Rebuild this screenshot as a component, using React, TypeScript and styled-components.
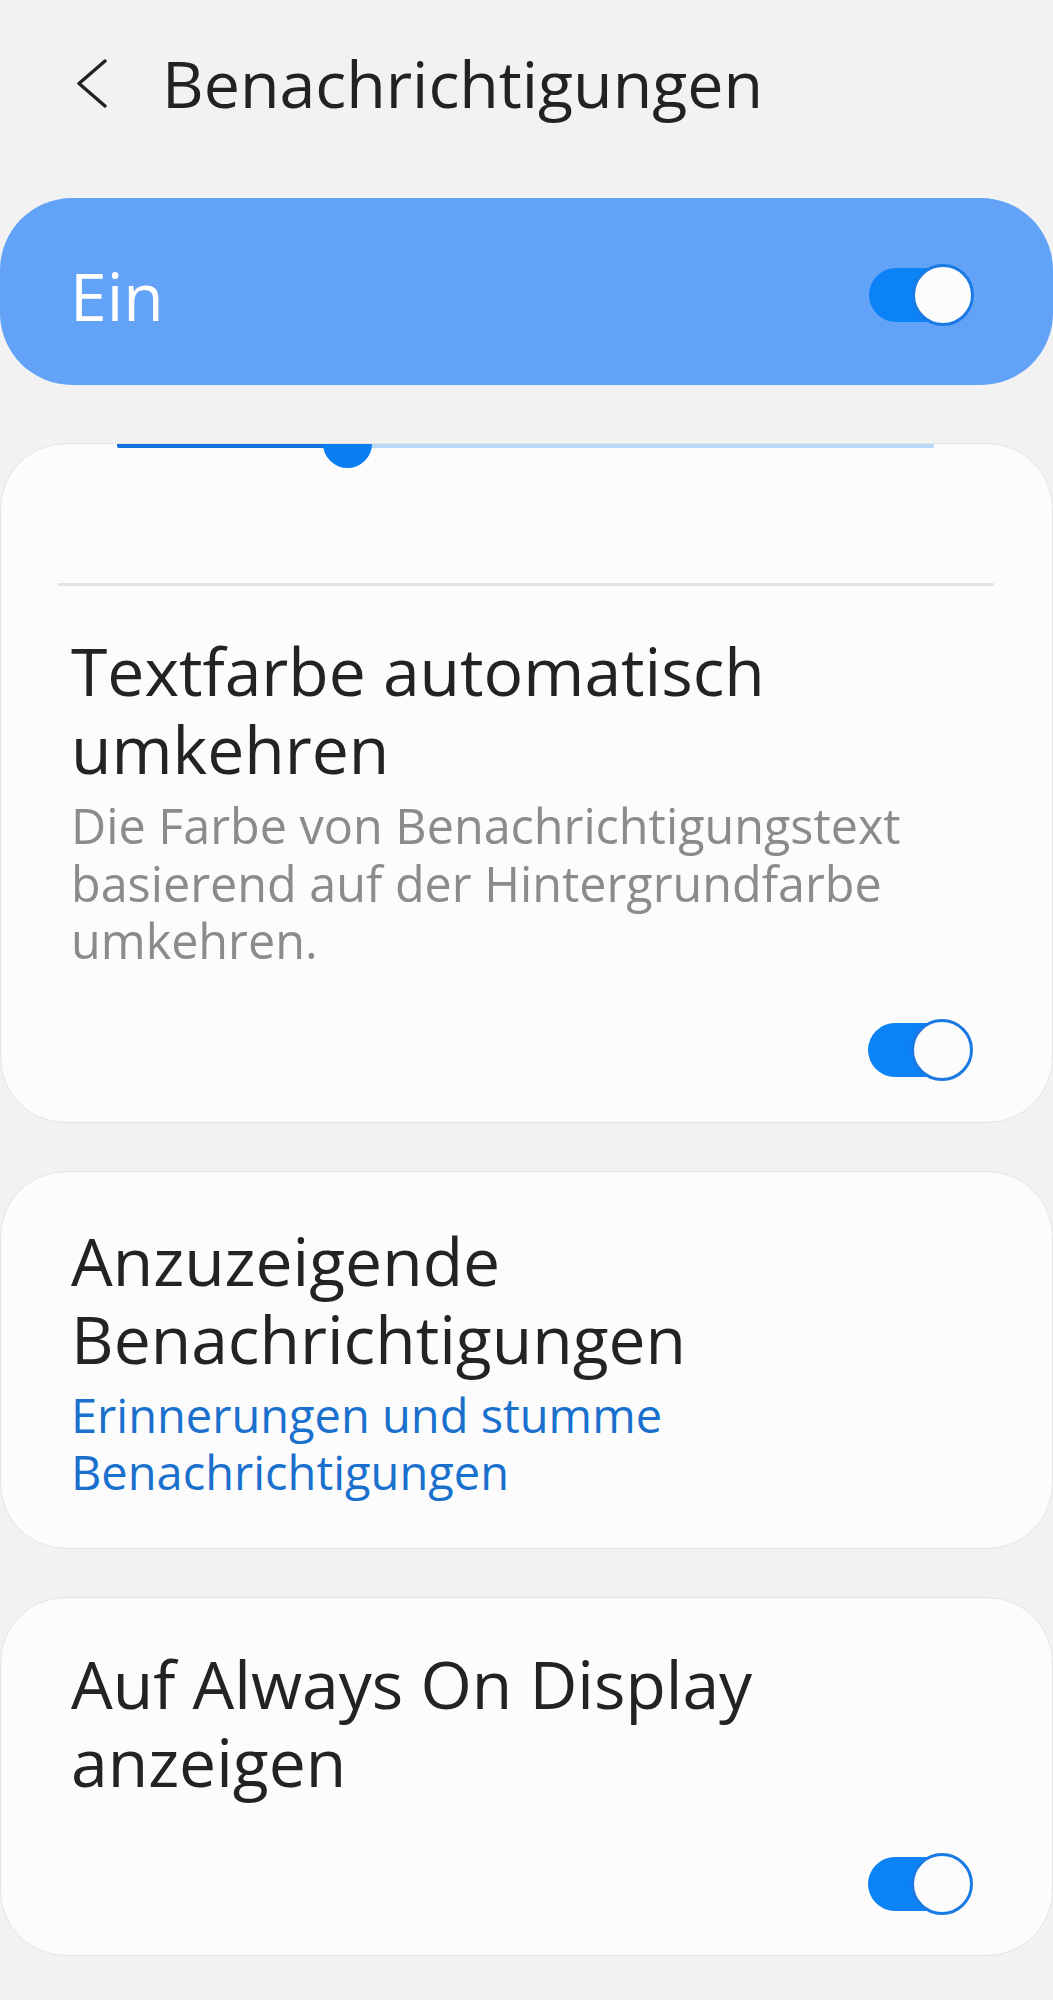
import React from "react";
import styled, { createGlobalStyle } from "styled-components";

const GlobalStyle = createGlobalStyle`
  html, body {
    margin: 0;
    padding: 0;
    background: #f2f2f2;
  }
  body {
    font-family: "Open Sans", "Noto Sans", sans-serif;
    -webkit-font-smoothing: antialiased;
  }
  * { box-sizing: border-box; }
`;

const Page = styled.div`
  width: 1053px;
  min-height: 2000px;
  background: #f2f2f2;
  display: flex;
  flex-direction: column;
  padding-bottom: 48px;
`;

const Header = styled.header`
  display: flex;
  align-items: center;
  gap: 54px;
  padding: 43px 0 0 76px;
  height: 123px;
`;

const BackIcon = styled.svg`
  width: 32px;
  height: 50px;
  flex-shrink: 0;
`;

const Title = styled.h1`
  margin: 0;
  font-size: 64.5px;
  line-height: 80px;
  font-weight: 400;
  color: #222222;
`;

const MasterBar = styled.div`
  margin-top: 75px;
  height: 187px;
  border-radius: 72px;
  background: #62a3f8;
  display: flex;
  align-items: center;
  justify-content: space-between;
  padding: 6px 79px 0 70px;
`;

const MasterLabel = styled.span`
  font-size: 66px;
  line-height: 80px;
  color: #ffffff;
`;

const ToggleBox = styled.div`
  position: relative;
  width: 105px;
  height: 62px;
  flex-shrink: 0;
`;

const ToggleTrack = styled.div`
  position: absolute;
  left: 0;
  top: 4px;
  width: 96px;
  height: 54px;
  border-radius: 27px;
  background: #0b82f6;
`;

const ToggleThumb = styled.div`
  position: absolute;
  right: 0;
  top: 0;
  width: 62px;
  height: 62px;
  border-radius: 50%;
  background: #fcfcfc;
  border: 3px solid #1a7ae4;
`;

const Toggle = () => (
  <ToggleBox>
    <ToggleTrack />
    <ToggleThumb />
  </ToggleBox>
);

const Card = styled.section<{ $top: number }>`
  margin-top: ${(p) => p.$top}px;
  background: #fcfcfc;
  border: 1px solid #e4e4e4;
  border-radius: 66px;
  overflow: hidden;
  display: flex;
  flex-direction: column;
`;

const SliderTrack = styled.div`
  position: relative;
  margin: 0 118px 0 116px;
  height: 4px;
  background: #b9d7f6;
  border-radius: 0 0 2px 2px;
`;

const SliderFill = styled.div`
  height: 100%;
  background: #1273de;
  border-radius: 0 0 2px 2px;
`;

const SliderThumb = styled.div`
  position: absolute;
  top: -25px;
  width: 49px;
  height: 49px;
  margin-left: -24.5px;
  border-radius: 50%;
  background: #0b7ef2;
`;

const Divider = styled.div`
  margin: 135px 58px 0 57px;
  height: 3px;
  background: #e3e3e3;
`;

const Item = styled.div<{ $top: number; $bottom: number }>`
  display: flex;
  flex-direction: column;
  padding: ${(p) => p.$top}px 70px ${(p) => p.$bottom}px 70px;
`;

const ItemTitle = styled.div`
  font-size: 66px;
  line-height: 78px;
  color: #232323;
`;

const ItemText = styled.div<{ $link?: boolean }>`
  margin-top: 10px;
  font-size: ${(p) => (p.$link ? 47 : 48.5)}px;
  line-height: 57.5px;
  color: ${(p) => (p.$link ? "#1a70cd" : "#8b8b8b")};
`;

const ToggleRow = styled.div<{ $top: number }>`
  display: flex;
  justify-content: flex-end;
  margin: ${(p) => p.$top}px 9px 0 0;
`;

export default function App() {
  const sliderPos = 230;
  return (
    <>
      <GlobalStyle />
      <Page>
        <Header>
          <BackIcon viewBox="0 0 32 50" fill="none">
            <polyline
              points="29,3 3,25.5 29,48"
              stroke="#222222"
              strokeWidth="3.4"
              strokeLinecap="round"
              strokeLinejoin="round"
            />
          </BackIcon>
          <Title>Benachrichtigungen</Title>
        </Header>

        <MasterBar>
          <MasterLabel>Ein</MasterLabel>
          <Toggle />
        </MasterBar>

        <Card $top={58}>
          <SliderTrack>
            <SliderFill style={{ width: sliderPos }} />
            <SliderThumb style={{ left: sliderPos }} />
          </SliderTrack>
          <Divider />
          <Item $top={45} $bottom={41}>
            <ItemTitle>Textfarbe automatisch umkehren</ItemTitle>
            <ItemText>
              Die Farbe von Benachrichtigungstext basierend auf der Hintergrundfarbe umkehren.
            </ItemText>
            <ToggleRow $top={49}>
              <Toggle />
            </ToggleRow>
          </Item>
        </Card>

        <Card $top={48}>
          <Item $top={49} $bottom={46}>
            <ItemTitle>Anzuzeigende Benachrichtigungen</ItemTitle>
            <ItemText $link>Erinnerungen und stumme Benachrichtigungen</ItemText>
          </Item>
        </Card>

        <Card $top={48}>
          <Item $top={46} $bottom={40}>
            <ItemTitle>Auf Always On Display anzeigen</ItemTitle>
            <ToggleRow $top={53}>
              <Toggle />
            </ToggleRow>
          </Item>
        </Card>
      </Page>
    </>
  );
}
